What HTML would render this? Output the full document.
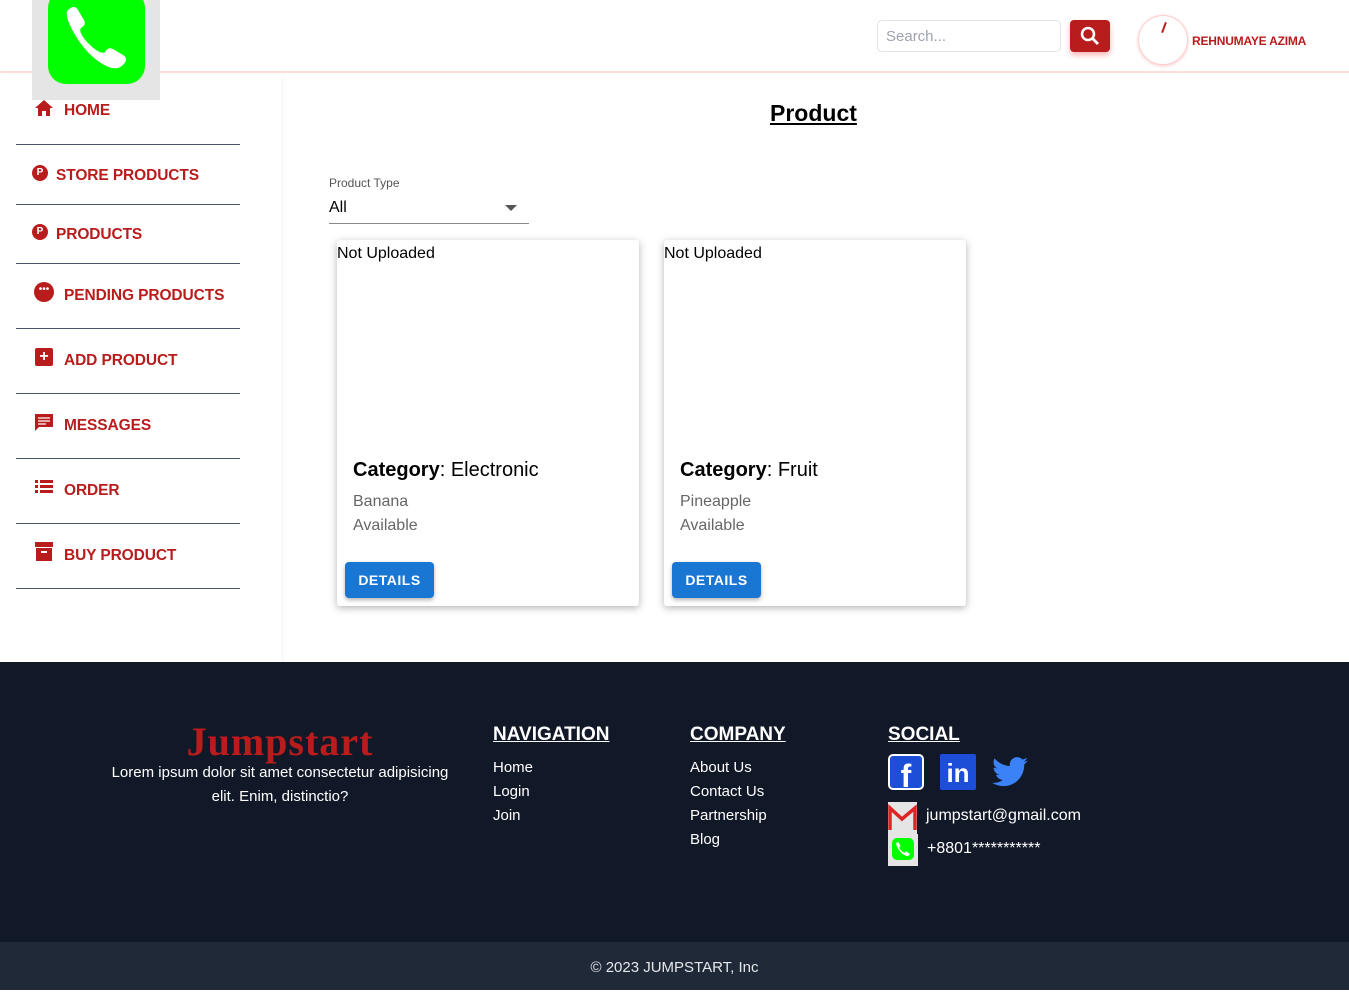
<!DOCTYPE html>
<html><head><style>
*{box-sizing:border-box;margin:0;padding:0}
body{width:1349px;height:990px;font-family:"Liberation Sans",sans-serif;background:#fff;position:relative;overflow:hidden}
.hdr{position:absolute;left:0;top:0;width:1349px;height:73px;border-bottom:2px solid #fdd;background:#fff}
.logo{position:absolute;left:32px;top:0;width:128px;height:100px;background:#e5e5e5;z-index:3}
.logo .g{position:absolute;left:16px;top:-10px;width:97px;height:94px;background:#00ff00;border-radius:18px}
.search{position:absolute;left:877px;top:20px;width:184px;height:32px;border:1px solid #e2e2e8;border-radius:5px;color:#9ca3af;font-size:15px;padding:7px 8px}
.sbtn{position:absolute;left:1070px;top:20px;width:40px;height:32px;background:#b91c1c;border-radius:4px;box-shadow:0 3px 6px rgba(239,68,68,.4)}
.av{position:absolute;left:1138px;top:15px;width:50px;height:50px;border-radius:50%;border:1px solid #fcc;box-shadow:0 1px 3px rgba(239,68,68,.3)}
.name{position:absolute;left:1192px;top:34px;font-size:12px;font-weight:bold;color:#b91c1c;letter-spacing:-.2px}
.side{position:absolute;left:0;top:75px;width:281px;height:587px;background:#fff;box-shadow:2px 0 6px rgba(0,0,0,.04)}
.item{position:absolute;left:16px;width:224px;border-bottom:1px solid #475569}
.item span{position:absolute;font-size:15.5px;font-weight:bold;color:#b91c1c;white-space:nowrap;letter-spacing:-.1px}
.ic{position:absolute;background:#b91c1c}
.title{position:absolute;left:770px;top:100px;font-size:23px;font-weight:bold;text-decoration:underline}
.lbl{position:absolute;left:329px;top:176px;font-size:12px;color:#555}
.sel{position:absolute;left:329px;top:198px;width:200px;height:26px;border-bottom:1px solid #888;font-size:16px;padding-top:1px}
.card{position:absolute;top:240px;width:302px;height:366px;background:#fff;box-shadow:0 2px 8px rgba(0,0,0,.3);border-radius:3px}
.card .nu{position:absolute;left:0;top:5px;font-size:16px}
.card .cat{position:absolute;left:16px;top:219px;font-size:20px}
.card .p{position:absolute;left:16px;font-size:16px;color:#666}
.card .btn{position:absolute;left:8px;top:322px;width:89px;height:36px;background:#1976d2;color:#fff;font-size:14px;font-weight:bold;text-align:center;line-height:36px;border-radius:4px;letter-spacing:.5px;box-shadow:0 2px 4px rgba(0,0,0,.3)}
.foot{position:absolute;left:0;top:662px;width:1349px;height:280px;background:#111827;color:#fff}
.bot{position:absolute;left:0;top:942px;width:1349px;height:48px;background:#1f2937;color:#e5e7eb;font-size:15px;text-align:center;line-height:52px}
.h{position:absolute;font-size:19px;font-weight:bold;text-decoration:underline;top:62px}
.l{position:absolute;font-size:15px}
</style></head><body>
<div class="hdr"></div>
<div class="logo"><div class="g"><svg width="97" height="94" viewBox="0 0 97 94"><path d="M20 20c4-4 8-4 10 0l6 10c2 4 0 6-3 8-2 2 0 8 8 16s14 10 16 8c2-3 4-5 8-3l10 6c4 2 4 6 0 10-6 6-16 4-30-8S14 26 20 20z" fill="#fff"/></svg></div></div>
<div class="search">Search...</div>
<div class="sbtn"><svg width="40" height="32"><circle cx="18" cy="14" r="6" stroke="#fff" stroke-width="2.5" fill="none"/><path d="M22 18l6 6" stroke="#fff" stroke-width="2.8"/></svg></div>
<div class="av"><div style="position:absolute;left:24px;top:6px;width:2px;height:11px;background:#b91c1c;transform:rotate(20deg)"></div></div>
<div class="name">REHNUMAYE AZIMA</div>
<div class="side">
<div class="item" style="top:0;height:70px"><span style="left:48px;top:27px">HOME</span><svg style="position:absolute;left:18px;top:24px" width="20" height="18"><path d="M10 1L1 9h3v8h4v-5h4v5h4V9h3z" fill="#b91c1c"/></svg></div>
<div class="item" style="top:70px;height:60px"><span style="left:40px;top:22px">STORE PRODUCTS</span><div class="ic" style="left:16px;top:20px;width:16px;height:16px;border-radius:50%;color:#fff;font-size:10px;font-weight:bold;text-align:center;line-height:16px">P</div></div>
<div class="item" style="top:130px;height:59px"><span style="left:40px;top:21px">PRODUCTS</span><div class="ic" style="left:16px;top:19px;width:16px;height:16px;border-radius:50%;color:#fff;font-size:10px;font-weight:bold;text-align:center;line-height:16px">P</div></div>
<div class="item" style="top:189px;height:65px"><span style="left:48px;top:23px">PENDING PRODUCTS</span><div class="ic" style="left:18px;top:18px;width:20px;height:20px;border-radius:50%;color:#fff;font-size:10px;text-align:center;line-height:16px">•••</div></div>
<div class="item" style="top:254px;height:65px"><span style="left:48px;top:23px">ADD PRODUCT</span><div class="ic" style="left:19px;top:19px;width:18px;height:18px;border-radius:2px;color:#fff;font-size:16px;font-weight:bold;text-align:center;line-height:17px">+</div></div>
<div class="item" style="top:319px;height:65px"><span style="left:48px;top:23px">MESSAGES</span><svg style="position:absolute;left:18px;top:19px" width="20" height="20"><path d="M1 1h18v13H5l-4 4z" fill="#b91c1c"/><path d="M4 5h12M4 8h12M4 11h8" stroke="#fff" stroke-width="1.3"/></svg></div>
<div class="item" style="top:384px;height:65px"><span style="left:48px;top:23px">ORDER</span><svg style="position:absolute;left:19px;top:21px" width="18" height="14"><path d="M0 0h3v3H0zM5 0h13v3H5zM0 5h3v3H0zM5 5h13v3H5zM0 10h3v3H0zM5 10h13v3H5z" fill="#b91c1c"/></svg></div>
<div class="item" style="top:449px;height:65px"><span style="left:48px;top:23px">BUY PRODUCT</span><svg style="position:absolute;left:19px;top:18px" width="18" height="20"><path d="M0 0h18v5H0zM1 6h16v13H1z" fill="#b91c1c"/><path d="M6 10h6" stroke="#fff" stroke-width="2"/></svg></div>
</div>
<div class="title">Product</div>
<div class="lbl">Product Type</div>
<div class="sel">All<svg style="position:absolute;right:12px;top:7px" width="12" height="6"><path d="M0 0h12L6 6z" fill="#555"/></svg></div>
<div class="card" style="left:337px"><div class="nu">Not Uploaded</div><div class="cat"><b>Category</b>: Electronic</div><div class="p" style="top:253px">Banana</div><div class="p" style="top:277px">Available</div><div class="btn">DETAILS</div></div>
<div class="card" style="left:664px"><div class="nu">Not Uploaded</div><div class="cat"><b>Category</b>: Fruit</div><div class="p" style="top:253px">Pineapple</div><div class="p" style="top:277px">Available</div><div class="btn">DETAILS</div></div>
<div class="foot">
<div style="position:absolute;left:80px;top:56px;width:400px;text-align:center;font-family:'Liberation Serif',serif;font-size:40px;font-weight:bold;color:#b91c1c;letter-spacing:1px">Jumpstart</div>
<div style="position:absolute;left:105px;top:99px;width:350px;text-align:center;font-size:15px;line-height:24px">Lorem ipsum dolor sit amet consectetur adipisicing elit. Enim, distinctio?</div>
<div class="h" style="left:493px">NAVIGATION</div>
<div class="l" style="left:493px;top:97px">Home</div><div class="l" style="left:493px;top:121px">Login</div><div class="l" style="left:493px;top:145px">Join</div>
<div class="h" style="left:690px">COMPANY</div>
<div class="l" style="left:690px;top:97px">About Us</div><div class="l" style="left:690px;top:121px">Contact Us</div><div class="l" style="left:690px;top:145px">Partnership</div><div class="l" style="left:690px;top:169px">Blog</div>
<div class="h" style="left:888px">SOCIAL</div>
<div style="position:absolute;left:888px;top:92px;width:36px;height:36px;background:#1d4ed8;border:2px solid #fff;border-radius:5px;color:#fff;font-size:32px;font-weight:bold;text-align:center;line-height:40px">f</div>
<div style="position:absolute;left:940px;top:92px;width:36px;height:36px;background:#1d4ed8;border-radius:2px;color:#fff;font-size:26px;font-weight:bold;text-align:center;line-height:38px">in</div>
<svg style="position:absolute;left:992px;top:94px" width="36" height="32" viewBox="0 0 24 20"><path d="M24 2.4c-.9.4-1.8.6-2.8.8 1-.6 1.8-1.6 2.2-2.7-1 .6-2 1-3.1 1.2A4.9 4.9 0 0011.9 6C7.8 5.8 4.2 3.8 1.7.9c-1.3 2.3-.7 5.1 1.5 6.6-.8 0-1.6-.2-2.2-.6 0 2.4 1.7 4.4 3.9 4.8-.7.2-1.5.2-2.2.1.6 2 2.4 3.4 4.6 3.4A9.9 9.9 0 010 17.2 14 14 0 007.5 19.4c9.1 0 14-7.5 14-14v-.6c1-.7 1.8-1.6 2.5-2.4z" fill="#3b82f6"/></svg>
<div style="position:absolute;left:888px;top:140px;width:29px;height:32px;background:#e5e5e5"><svg width="29" height="32"><path d="M2 28V6l12 11L27 6v22" stroke="#dc2626" stroke-width="3.5" fill="none"/></svg></div>
<div class="l" style="left:926px;top:145px;font-size:16px">jumpstart@gmail.com</div>
<div style="position:absolute;left:888px;top:172px;width:30px;height:32px;background:#e5e5e5"><div style="position:absolute;left:4px;top:4px;width:22px;height:22px;background:#00ff00;border-radius:5px"><svg width="22" height="22" viewBox="0 0 97 94"><path d="M20 20c4-4 8-4 10 0l6 10c2 4 0 6-3 8-2 2 0 8 8 16s14 10 16 8c2-3 4-5 8-3l10 6c4 2 4 6 0 10-6 6-16 4-30-8S14 26 20 20z" fill="#fff"/></svg></div></div>
<div class="l" style="left:927px;top:178px;font-size:16px">+8801***********</div>
</div>
<div class="bot">© 2023 JUMPSTART, Inc</div>
</body></html>
